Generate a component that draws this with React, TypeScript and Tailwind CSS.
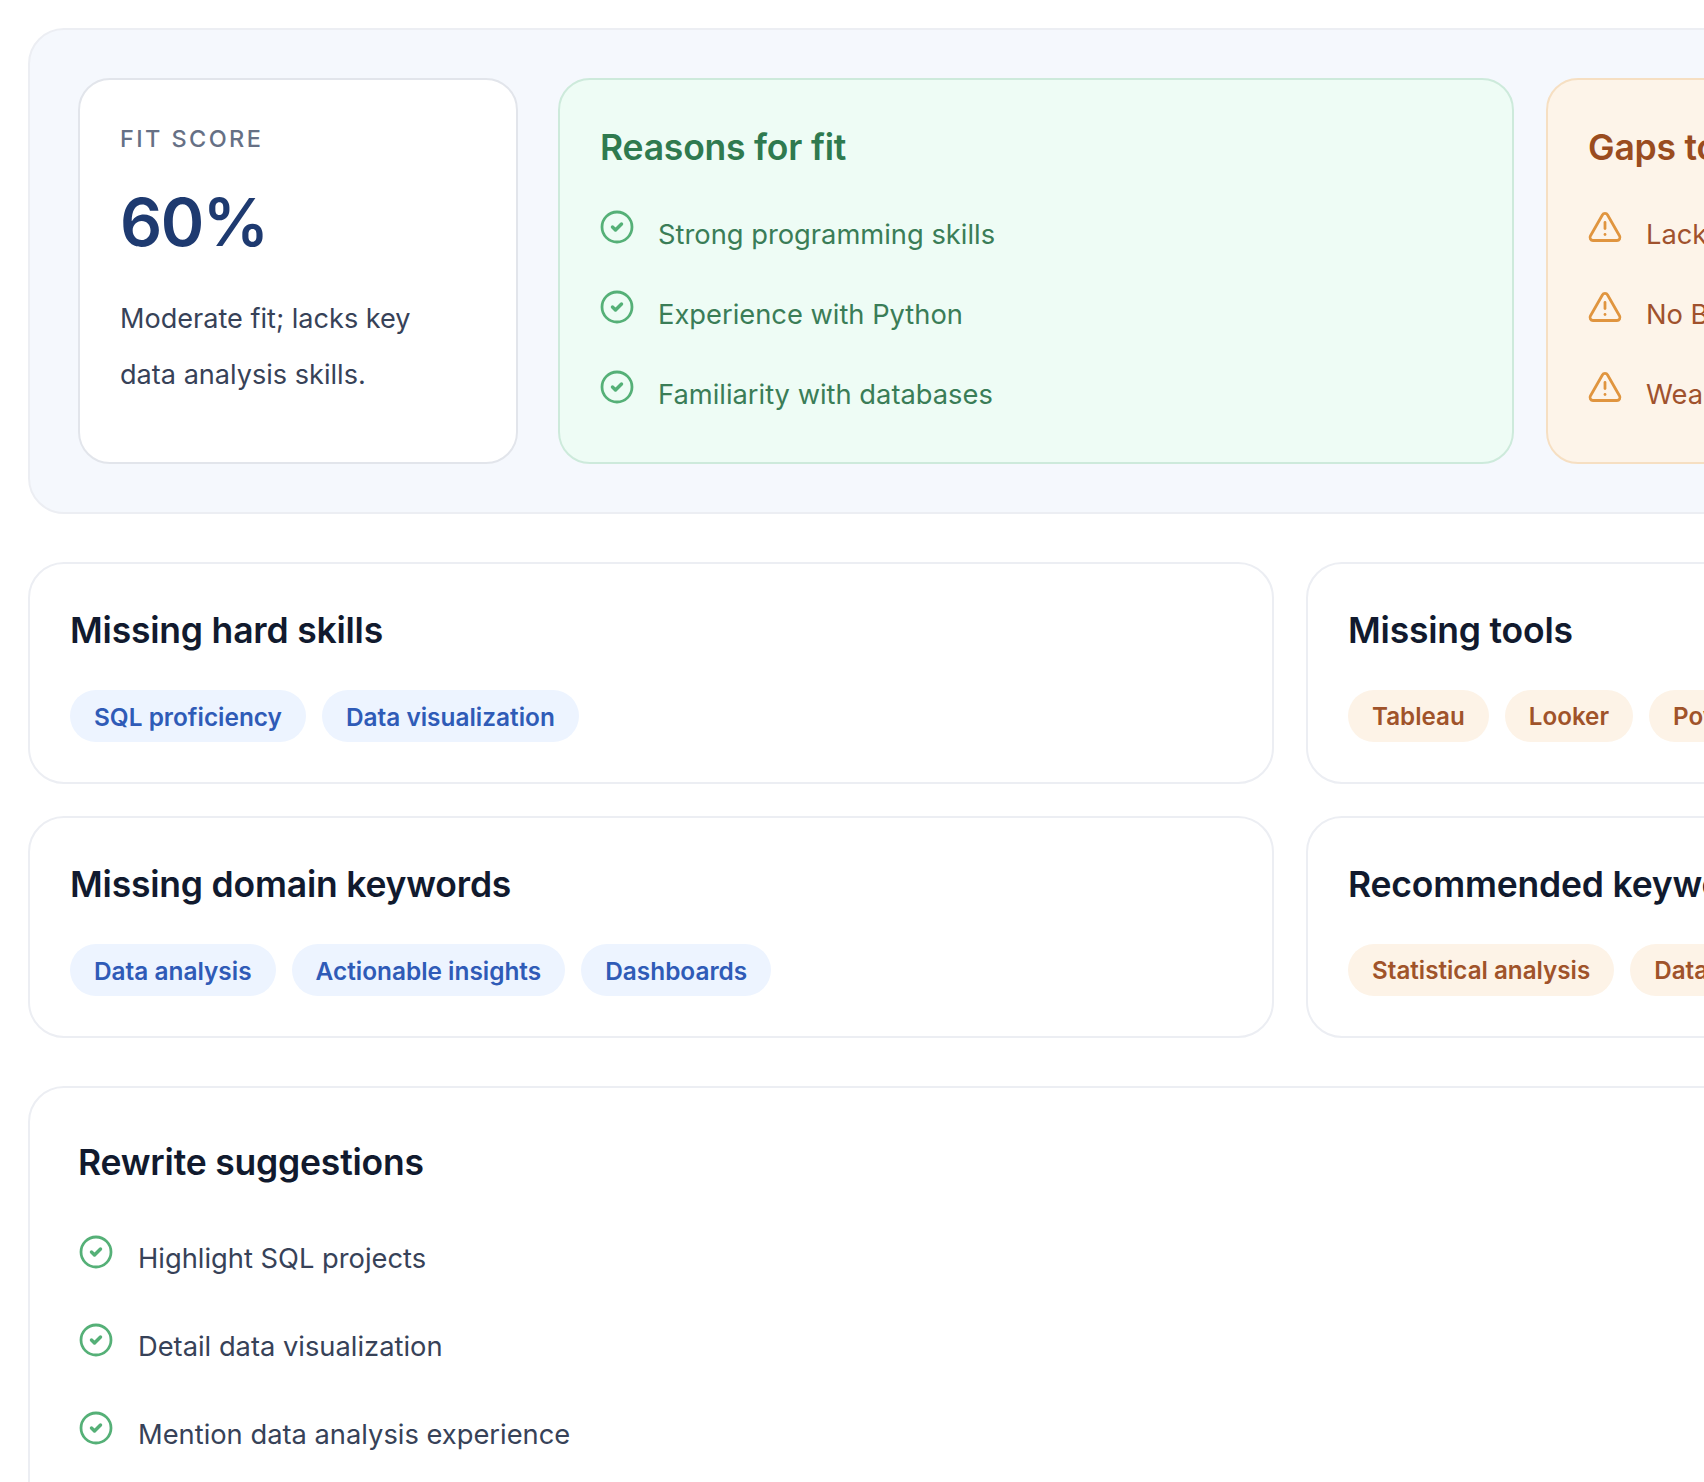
const inter = "font-['Inter',sans-serif]";
const heading = "font-['Inter',sans-serif] font-semibold text-[35.5px] leading-[52px] tracking-[-0.2px] whitespace-nowrap";

function CheckIcon({ className }: { className: string }) {
  return (
    <svg viewBox="0 0 24 24" fill="none" stroke="#55b077" strokeWidth="1.85" strokeLinecap="round" strokeLinejoin="round" className={`h-9 w-9 shrink-0 ${className}`}>
      <circle cx="12" cy="12" r="10" />
      <path d="m9 12 2 2 4-4" strokeWidth="2.3" />
    </svg>
  );
}

function WarnIcon({ className }: { className: string }) {
  return (
    <svg viewBox="0 0 24 24" fill="none" stroke="#e0953f" strokeWidth="1.85" strokeLinecap="round" strokeLinejoin="round" className={`h-9 w-9 shrink-0 ${className}`}>
      <path d="m21.73 18-8-14a2 2 0 0 0-3.48 0l-8 14A2 2 0 0 0 4 21h16a2 2 0 0 0 1.73-3" />
      <path d="M12 9v4" />
      <path d="M12 17h.01" />
    </svg>
  );
}

function Row({ kind, text, textClass, gap, iconClass }: { kind: "check" | "warn"; text: string; textClass: string; gap: string; iconClass: string }) {
  return (
    <li className={`flex items-start ${gap}`}>
      {kind === "check" ? <CheckIcon className={iconClass} /> : <WarnIcon className={iconClass} />}
      <span className={`${inter} text-[27.3px] leading-[56px] whitespace-nowrap ${textClass}`}>{text}</span>
    </li>
  );
}

function Tag({ text, tone }: { text: string; tone: "blue" | "orange" }) {
  const c = tone === "blue" ? "bg-[#edf4ff] text-[#2f5bb7] text-[24.4px]" : "bg-[#fdf3e7] text-[#a0532a] text-[24.2px]";
  return (
    <span className={`${inter} ${c} h-[52px] shrink-0 rounded-full px-6 pt-[2px] flex items-center font-semibold whitespace-nowrap`}>
      {text}
    </span>
  );
}

function TagCard({ title, tags, tone, width }: { title: string; tags: string[]; tone: "blue" | "orange"; width: string }) {
  return (
    <section className={`${width} shrink-0 h-[222px] rounded-[36px] border-2 border-[#eceef3] bg-white p-[40px] pt-[41px]`}>
      <h3 className={`${heading} text-[#111a2e]`}>{title}</h3>
      <div className="mt-[33px] flex gap-4">
        {tags.map((t) => (
          <Tag key={t} text={t} tone={tone} />
        ))}
      </div>
    </section>
  );
}

const topIcon = "mt-[2px] -ml-px";
const rewriteIcon = "mt-[3px]";

export default function App() {
  return (
    <div className="w-[1704px] h-[1482px] overflow-hidden bg-white pl-[28px] pt-[28px]">
      <div className="w-[1900px] flex flex-col">
        <section className="h-[486px] rounded-[36px] border-2 border-[#eceef3] bg-[#f5f8fd] p-[48px] flex">
          <div className="w-[440px] shrink-0 rounded-[32px] border-2 border-[#e2e5eb] bg-white p-[40px] pt-[41px]">
            <div className={`${inter} text-[23.5px] leading-[36px] font-medium tracking-[2.4px] text-[#667085]`}>FIT SCORE</div>
            <div className={`${inter} mt-[29px] text-[66px] leading-[72px] font-semibold tracking-[-1.5px] text-[#1e3a70]`}>60%</div>
            <p className={`${inter} mt-[33px] text-[27.1px] leading-[56px] text-[#374258]`}>
              Moderate fit; lacks key
              <br />
              data analysis skills.
            </p>
          </div>
          <div className="ml-[40px] w-[956px] shrink-0 rounded-[32px] border-2 border-[#cdeadb] bg-[#eefcf5] p-[40px] pt-[42px]">
            <h3 className={`${heading} text-[#2f7a4f]`}>Reasons for fit</h3>
            <ul className="mt-[33px] flex flex-col gap-6">
              <Row kind="check" text="Strong programming skills" textClass="text-[#3a7d57]" gap="gap-[23px]" iconClass={topIcon} />
              <Row kind="check" text="Experience with Python" textClass="text-[#3a7d57]" gap="gap-[23px]" iconClass={topIcon} />
              <Row kind="check" text="Familiarity with databases" textClass="text-[#3a7d57]" gap="gap-[23px]" iconClass={topIcon} />
            </ul>
          </div>
          <div className="ml-[32px] w-[600px] shrink-0 rounded-[32px] border-2 border-[#f6dfc2] bg-[#fdf4e9] p-[40px] pt-[42px]">
            <h3 className={`${heading} text-[#9a4c1f]`}>Gaps to address</h3>
            <ul className="mt-[33px] flex flex-col gap-6">
              <Row kind="warn" text="Lacks SQL experience" textClass="text-[#a0522d]" gap="gap-[23px]" iconClass={topIcon} />
              <Row kind="warn" text="No BI tool experience" textClass="text-[#a0522d]" gap="gap-[23px]" iconClass={topIcon} />
              <Row kind="warn" text="Weak data analysis" textClass="text-[#a0522d]" gap="gap-[23px]" iconClass={topIcon} />
            </ul>
          </div>
        </section>

        <div className="mt-[48px] flex gap-[32px]">
          <TagCard title="Missing hard skills" tags={["SQL proficiency", "Data visualization"]} tone="blue" width="w-[1246px]" />
          <TagCard title="Missing tools" tags={["Tableau", "Looker", "Power BI"]} tone="orange" width="w-[700px]" />
        </div>
        <div className="mt-[32px] flex gap-[32px]">
          <TagCard title="Missing domain keywords" tags={["Data analysis", "Actionable insights", "Dashboards"]} tone="blue" width="w-[1246px]" />
          <TagCard title="Recommended keywords" tags={["Statistical analysis", "Data storytelling"]} tone="orange" width="w-[700px]" />
        </div>

        <section className="mt-[48px] h-[500px] rounded-[36px] border-2 border-[#eceef3] bg-white p-[48px] pt-[49px]">
          <h3 className={`${heading} text-[#111a2e]`}>Rewrite suggestions</h3>
          <ul className="mt-[42px] flex flex-col gap-8">
            <Row kind="check" text="Highlight SQL projects" textClass="text-[#374258]" gap="gap-[24px]" iconClass={rewriteIcon} />
            <Row kind="check" text="Detail data visualization" textClass="text-[#374258]" gap="gap-[24px]" iconClass={rewriteIcon} />
            <Row kind="check" text="Mention data analysis experience" textClass="text-[#374258]" gap="gap-[24px]" iconClass={rewriteIcon} />
          </ul>
        </section>
      </div>
    </div>
  );
}
